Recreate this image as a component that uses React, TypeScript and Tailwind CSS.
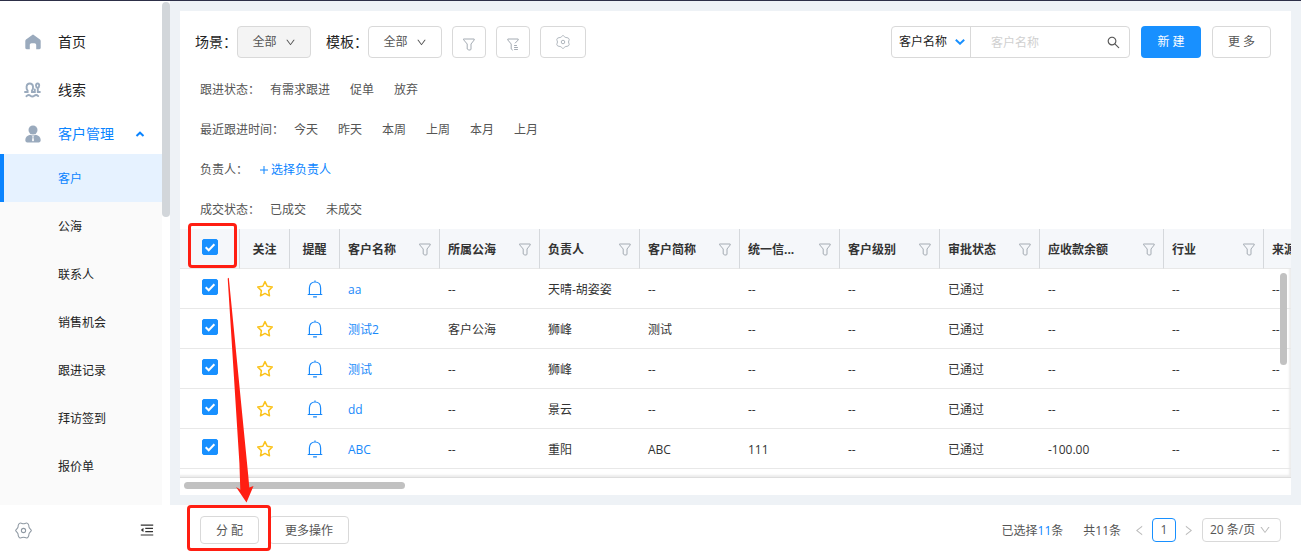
import { useState } from "react";
import { AiOutlineDown, AiOutlineLeft, AiOutlineMenuFold, AiOutlineRight, AiOutlineSearch } from "react-icons/ai";

interface Column {
  title: string;
  width: string;
}

interface Customer {
  name: string;
  cells: string[];
}

const subMenu = ["客户", "公海", "联系人", "销售机会", "跟进记录", "拜访签到", "报价单"];

const filters = [
  { label: "跟进状态", options: ["有需求跟进", "促单", "放弃"] },
  { label: "最近跟进时间", options: ["今天", "昨天", "本周", "上周", "本月", "上月"] },
  { label: "负责人", options: [] },
  { label: "成交状态", options: ["已成交", "未成交"] },
];

const columns: Column[] = [
  { title: "客户名称", width: "w-[100px]" },
  { title: "所属公海", width: "w-[100px]" },
  { title: "负责人", width: "w-[100px]" },
  { title: "客户简称", width: "w-[100px]" },
  { title: "统一信...", width: "w-[100px]" },
  { title: "客户级别", width: "w-[100px]" },
  { title: "审批状态", width: "w-[100px]" },
  { title: "应收款余额", width: "w-[124px]" },
  { title: "行业", width: "w-[100px]" },
  { title: "来源", width: "w-[100px]" },
];

const customers: Customer[] = [
  { name: "aa", cells: ["--", "天晴-胡姿姿", "--", "--", "--", "已通过", "--", "--", "--"] },
  { name: "测试2", cells: ["客户公海", "狮峰", "测试", "--", "--", "已通过", "--", "--", "--"] },
  { name: "测试", cells: ["--", "狮峰", "--", "--", "--", "已通过", "--", "--", "--"] },
  { name: "dd", cells: ["--", "景云", "--", "--", "--", "已通过", "--", "--", "--"] },
  { name: "ABC", cells: ["--", "重阳", "ABC", "111", "--", "已通过", "-100.00", "--", "--"] },
];

const HomeIcon = () => (
  <svg viewBox="0 0 16 16" className="h-4 w-4" fill="#9aaabd">
    <path d="M7.2.9a1.4 1.4 0 0 1 1.6 0l6.2 4.7c.5.4.7.8.7 1.4v6.8c0 .9-.5 1.4-1.4 1.4h-3.1V11c0-1-.7-1.7-1.7-1.7h-3C5.500 9.300 4.800 10 4.800 11v4.200H1.700c-.9 0-1.400-.5-1.400-1.400V7c0-.6.200-1 .7-1.400z" />
  </svg>
);

const LeadsIcon = () => (
  <svg viewBox="0 0 17 16" className="h-4 w-[17px]" fill="none" stroke="#9aaabd" strokeWidth="1.900" strokeLinecap="round">
    <path d="M1 10h2.600V8.600C2 6.800 1.800 1.500 5.800 1.500s3.800 5.300 2.200 7.100V10h2.800V7.500" />
    <path d="M13.500 5.800c-1.800-.6-2.200-4.300.1-4.300s1.900 3.700.2 4.300V10h2.100" />
    <path d="M2.500 14.200c1.300-1.500 2.600-1.500 3.900-.5s2.600 1 3.900 0 2.600-1 3.900.4" />
  </svg>
);

const CustomerIcon = () => (
  <svg viewBox="0 0 16 18" className="h-[18px] w-4" fill="#9aaabd">
    <circle cx="8" cy="5" r="4.500" />
    <path d="M5.300 9.800c1.700.9 3.700.9 5.400 0 3 .7 4.900 2.500 5 5.200 0 1.600-.7 2.400-2 2.400H2.300C1 17.400.3 16.600.3 15c.1-2.700 2-4.500 5-5.200z" />
    <path d="M7.300 11h1.400l-.3 1.200.6 3.300-1 .9-1-.9.600-3.300z" fill="#fff" />
  </svg>
);

const FunnelIcon = ({ list = false }: { list?: boolean }) => (
  <svg viewBox="0 0 12 13" className="h-[13px] w-3 shrink-0" fill="none" stroke="#a4abb3" strokeLinejoin="round" strokeLinecap="round">
    {list ? (
      <path d="M5.500 12l-1.300-1V6L.8 2V1h10.400v1L8.300 5M7.500 7.500h2M7.500 9.500h3M7.500 11.500h3" />
    ) : (
      <path d="M.8 1h10.400v1L8 6v5q0 1-1 1H5.800l-1.600-1V6L.8 2z" />
    )}
  </svg>
);

const GearIcon = ({ className }: { className: string }) => (
  <svg viewBox="0 0 16 16" className={className} fill="none" stroke="currentColor" strokeLinejoin="round">
    <path d="M.6 8C.6 7.200 3 5.800 2.900 4.500 2.800 3.200 3.800.900 5.100.900 6.200.900 7 1.700 8 1.700S9.800.900 10.900.900c1.300 0 2.300 2.300 2.200 3.600C13 5.800 15.400 7.200 15.400 8S13 10.200 13.100 11.500c.1 1.300-.9 3.600-2.200 3.600-1.100 0-1.900-.8-2.900-.8s-1.800.8-2.900.8c-1.300 0-2.300-2.300-2.200-3.600C3 10.200.6 8.800.6 8z" />
    <circle cx="8" cy="8" r="2" />
  </svg>
);

const StarIcon = () => (
  <svg viewBox="0 0 18 18" className="h-[18px] w-[18px]" fill="none" stroke="#fbc21a" strokeWidth="1.500" strokeLinejoin="round">
    <path d="M9 1.600l2.200 4.700 5.100.7-3.700 3.600.9 5.200L9 13.400l-4.500 2.400.9-5.200L1.700 7l5.100-.7z" />
  </svg>
);

const BellIcon = () => (
  <svg viewBox="0 0 16 18" className="h-[18px] w-4" fill="none" stroke="#1989fa" strokeWidth="1.200" strokeLinecap="round">
    <path d="M8 .9v1M1.200 14.500h13.600M2.400 14.300V8c0-3.600 2.100-6 5.600-6s5.600 2.400 5.600 6v6.300M6.500 16.800h3" />
  </svg>
);

const Checkbox = ({ label, checked, onChange }: { label: string; checked: boolean; onChange: () => void }) => (
  <label className="relative mx-auto block h-4 w-4">
    <input
      type="checkbox"
      aria-label={label}
      checked={checked}
      onChange={onChange}
      className="block h-4 w-4 appearance-none rounded-xs border border-[#d9d9d9] checked:border-[#1890ff] checked:bg-[#1890ff]"
    />
    <svg viewBox="0 0 16 16" className="pointer-events-none absolute inset-0 h-4 w-4" fill="none" stroke="#fff" strokeWidth="2">
      <path d="M3.700 8.200l3 3 5.700-6" />
    </svg>
  </label>
);

const Sidebar = () => (
  <aside className="relative flex w-[170px] shrink-0 flex-col bg-white pr-2 pt-[17px] text-[#222]">
    <a href="#home" className="flex h-12 shrink-0 items-center gap-[17px] pl-[25px] text-sm">
      <HomeIcon />
      首页
    </a>
    <a href="#leads" className="flex h-12 shrink-0 items-center gap-[17px] pl-6 text-sm">
      <LeadsIcon />
      线索
    </a>
    <button className="flex h-10 shrink-0 items-center gap-[17px] pl-[25px] text-sm text-[#0a84ff]">
      <CustomerIcon />
      客户管理
      <svg viewBox="0 0 10 6" className="ml-1 h-1.5 w-2.5" fill="none" stroke="#0a84ff" strokeWidth="2">
        <path d="M1.500 5L5 1.700 8.500 5" />
      </svg>
    </button>
    <nav className="min-h-0 flex-1 overflow-hidden bg-[#fafafa] text-xs">
      {subMenu.map((item, i) => (
        <a
          key={item}
          href={`#${item}`}
          className={
            i === 0
              ? "flex h-12 items-center border-l-4 border-[#0a84ff] bg-[#e6f2ff] pl-[54px] pt-0.5 text-[#0a84ff]"
              : "flex h-12 items-center pl-[58px] pt-0.5"
          }
        >
          {item}
        </a>
      ))}
    </nav>
    <div className="absolute right-0 top-px h-[215px] w-2 rounded-full bg-[#d2d6da]" />
  </aside>
);

const Toolbar = () => (
  <div className="flex items-center justify-between pb-2.5 pl-[15px] pr-5 pt-[15px] text-xs text-[#555]">
    <div className="flex items-center gap-2.5">
      <div className="mr-[5px] flex items-center">
        <span className="text-sm text-[#222]">场景：</span>
        <button className="flex h-8 w-[74px] items-center justify-center gap-2 rounded border border-[#d9d9d9] bg-[#f4f4f4]">
          全部 <AiOutlineDown size={11} />
        </button>
      </div>
      <div className="flex items-center">
        <span className="text-sm text-[#222]">模板：</span>
        <button className="flex h-8 w-[74px] items-center justify-center gap-2 rounded border border-[#d9d9d9]">
          全部 <AiOutlineDown size={11} />
        </button>
      </div>
      <button aria-label="筛选" className="flex h-8 w-[34px] items-center justify-center rounded border border-[#d9d9d9] pt-1">
        <FunnelIcon />
      </button>
      <button aria-label="高级筛选" className="flex h-8 w-[34px] items-center justify-center rounded border border-[#d9d9d9] pt-1">
        <FunnelIcon list />
      </button>
      <button aria-label="设置" className="flex h-8 w-[46px] items-center justify-center rounded border border-[#d9d9d9] text-[#a4abb3]">
        <GearIcon className="h-3.5 w-3.5 rotate-90" />
      </button>
    </div>
    <div className="flex items-center gap-[11px]">
      <div className="flex h-8 w-[239px] items-center rounded border border-[#d9d9d9]">
        <div className="relative h-full w-[79px] border-r border-[#d9d9d9]">
          <select aria-label="搜索字段" className="h-full w-full appearance-none bg-transparent pl-[7px] text-[#222] outline-none">
            <option>客户名称</option>
          </select>
          <svg viewBox="0 0 10 6" className="pointer-events-none absolute right-[5px] top-3 h-1.5 w-2.5" fill="none" stroke="#1890ff" strokeWidth="2">
            <path d="M.8.800L5 4.700 9.200.8" />
          </svg>
        </div>
        <input aria-label="客户名称" placeholder="客户名称" className="h-full min-w-0 flex-1 bg-transparent pl-5 outline-none placeholder:text-[#d0d0d0]" />
        <button aria-label="搜索" className="flex w-8 justify-center">
          <AiOutlineSearch size={15} />
        </button>
      </div>
      <button className="h-8 w-[60px] rounded bg-[#1890ff] text-white">新 建</button>
      <button className="h-8 w-[59px] rounded border border-[#d9d9d9]">更 多</button>
    </div>
  </div>
);

const Filters = () => (
  <div className="pl-5 pt-px text-xs text-[#555]">
    {filters.map((row) => (
      <div key={row.label} className="flex h-10 items-center gap-2.5 pt-0.5">
        <span>{row.label}：</span>
        {row.options.length > 0 ? (
          <div className="flex gap-5">
            {row.options.map((option) => (
              <button key={option}>{option}</button>
            ))}
          </div>
        ) : (
          <button className="flex items-center gap-[3px] pl-0.5 text-[#0a84ff]">
            <svg viewBox="0 0 8 8" className="h-2 w-2" stroke="currentColor">
              <path d="M4 0v8M0 4h8" />
            </svg>
            选择负责人
          </button>
        )}
      </div>
    ))}
  </div>
);

const CustomerTable = () => {
  const [selected, setSelected] = useState<string[]>(customers.map((c) => c.name));
  const allSelected = selected.length === customers.length;

  const toggle = (name: string) =>
    setSelected(selected.includes(name) ? selected.filter((n) => n !== name) : [...selected, name]);

  return (
    <div className="relative min-h-0 flex-1 overflow-hidden border-b border-[#ddd] shadow-[inset_-2px_-2px_2px_rgba(0,0,0,0.08)]">
      <table className="w-[1184px] table-fixed border-separate border-spacing-0 text-left text-xs text-[#333] [&_td]:border-b [&_td]:border-b-[#e8e8e8] [&_th]:border-b [&_th]:border-b-[#e8e8e8]">
        <thead>
          <tr className="h-10 bg-[#f5f7fa]">
            <th className="w-[60px] border-r border-r-[#d5d8dc] pb-[3px]">
              <Checkbox label="全选" checked={allSelected} onChange={() => setSelected(allSelected ? [] : customers.map((c) => c.name))} />
            </th>
            <th className="w-[50px] border-r border-r-[#d5d8dc] pt-0.5 text-center font-bold">关注</th>
            <th className="w-[50px] border-r border-r-[#d5d8dc] pt-0.5 text-center font-bold">提醒</th>
            {columns.map((col) => (
              <th key={col.title} className={`${col.width} border-r border-r-[#d5d8dc] px-2 pt-0.5 font-bold`}>
                <div className="flex items-center justify-between">
                  <span className="whitespace-nowrap">{col.title}</span>
                  <FunnelIcon />
                </div>
              </th>
            ))}
          </tr>
        </thead>
        <tbody>
          {customers.map((customer) => (
            <tr key={customer.name} className="h-10">
              <td className="pb-[3px]">
                <Checkbox label={customer.name} checked={selected.includes(customer.name)} onChange={() => toggle(customer.name)} />
              </td>
              <td className="pt-px">
                <button aria-label="关注" className="mx-auto block">
                  <StarIcon />
                </button>
              </td>
              <td className="pt-px">
                <button aria-label="提醒" className="mx-auto block">
                  <BellIcon />
                </button>
              </td>
              <td className="px-2 pt-[3px]">
                <a href="#customer" className="text-[#1989fa]">{customer.name}</a>
              </td>
              {customer.cells.map((cell, i) => (
                <td key={i} className="whitespace-nowrap px-2 pt-[3px]">{cell}</td>
              ))}
            </tr>
          ))}
        </tbody>
      </table>
      <div className="absolute right-1 top-11 h-[92px] w-[7px] rounded-full bg-[#c1c1c1]" />
    </div>
  );
};

const Footer = () => (
  <footer className="flex h-[50px] shrink-0 items-center bg-white text-xs text-[#555]">
    <div className="flex w-[170px] shrink-0 items-center justify-between px-[15px]">
      <button aria-label="系统设置" className="text-[#8f99a3]">
        <GearIcon className="h-[17px] w-[17px]" />
      </button>
      <button aria-label="收起菜单">
        <AiOutlineMenuFold size={16} color="#333" />
      </button>
    </div>
    <div className="flex flex-1 items-center justify-between pl-[30px] pr-5">
      <div className="flex gap-2.5">
        <button className="h-7 w-[59px] rounded border border-[#d9d9d9] pt-px">分 配</button>
        <button className="h-7 w-20 rounded border border-[#d9d9d9] pt-px">更多操作</button>
      </div>
      <div className="flex items-center">
        <span className="mr-5 pt-px">
          已选择<span className="text-[#0a84ff]">11</span>条
        </span>
        <span className="mr-3 pt-px">共11条</span>
        <button aria-label="上一页" className="mr-1.5 text-[#bbb]">
          <AiOutlineLeft size={13} />
        </button>
        <button className="h-6 w-6 rounded border border-[#1890ff]">1</button>
        <button aria-label="下一页" className="ml-1.5 mr-[7px] text-[#bbb]">
          <AiOutlineRight size={13} />
        </button>
        <div className="relative">
          <select aria-label="每页条数" className="h-6 w-[79px] appearance-none rounded border border-[#d9d9d9] bg-white pl-[7px] outline-none">
            <option>20 条/页</option>
          </select>
          <AiOutlineDown size={12} color="#bbb" className="pointer-events-none absolute right-2.5 top-1.5" />
        </div>
      </div>
    </div>
  </footer>
);

/* Red marks that lead from "select all" to the assign button */
const Guide = () => (
  <div className="pointer-events-none absolute inset-0">
    <div className="absolute left-[188px] top-[222px] h-[45px] w-[49px] rounded border-3 border-[#ff1e12]" />
    <div className="absolute bottom-1 left-[187px] h-[46px] w-[84px] rounded border-3 border-[#ff1e12]" />
    <svg viewBox="0 0 30 230" className="absolute left-[226px] top-[274px] h-[230px] w-[30px]" fill="#ff1e12">
      <path d="M1.700 3.500L2.800 2.800 22.200 200 23.300 212.500 27.500 211 20.500 227.500 10 212 14.300 214.500 13.400 188z" />
    </svg>
  </div>
);

const App = () => {
  return (
    <div className="relative flex h-screen flex-col overflow-hidden border-t border-[#2d2f48] bg-[#eef2f6] font-['Open_Sans','Noto_Sans_CJK_SC',sans-serif]">
      <div className="flex min-h-0 flex-1">
        <Sidebar />
        <main className="flex min-w-0 flex-1 p-2.5">
          <section className="flex min-w-0 flex-1 flex-col bg-white">
            <Toolbar />
            <Filters />
            <CustomerTable />
            <div className="px-1 pb-1.5 pt-1">
              <div className="h-[7px] w-1/5 rounded-full bg-[#c1c1c1]" />
            </div>
          </section>
        </main>
      </div>
      <Footer />
      <Guide />
    </div>
  );
};

export default App;
